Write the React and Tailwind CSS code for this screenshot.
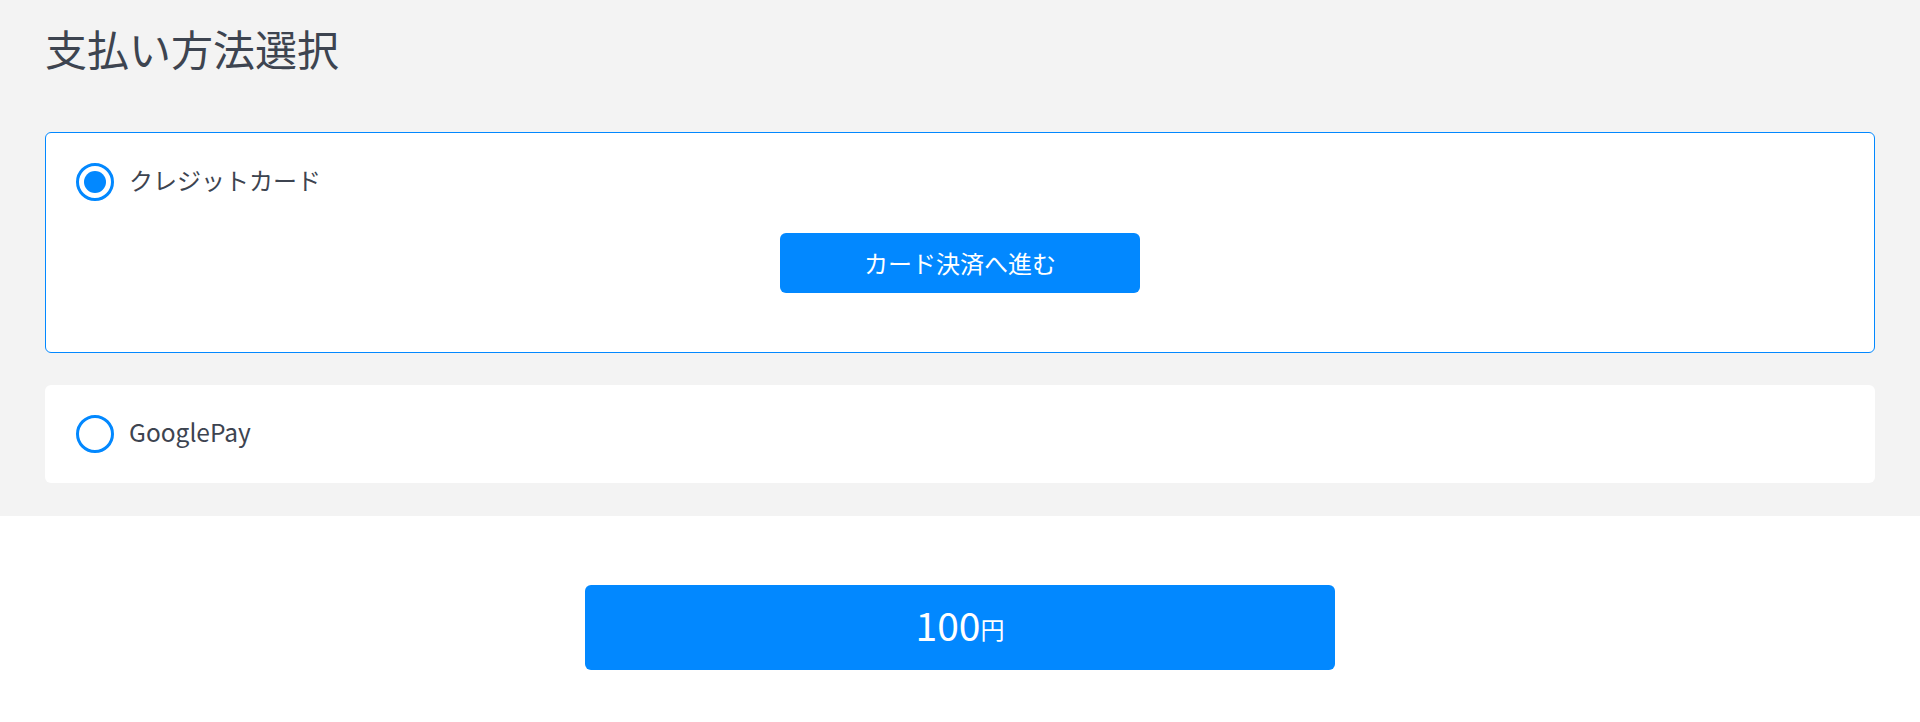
const FONT = "font-['Meiryo','Noto_Sans_CJK_JP',sans-serif]";

function Radio({ checked }) {
  return (
    <span className="flex h-[38px] w-[38px] shrink-0 items-center justify-center rounded-full border-[3px] border-[#0288ff] bg-white">
      {checked && <span className="h-[22px] w-[22px] rounded-full bg-[#0288ff]" />}
    </span>
  );
}

export default function App() {
  return (
    <div className={`min-h-screen bg-white text-[#3d4450] ${FONT}`}>
      <section className="bg-[#f3f3f3] px-[45px] pt-[18px] pb-[33px]">
        <h1 className="text-[42px] leading-[60px] font-normal">支払い方法選択</h1>

        {/* credit card */}
        <div className="mt-[54px] h-[221px] rounded-[6px] border border-[#0288ff] bg-white pl-[30px] pr-[30px] pt-[30px]">
          <label className="flex items-center">
            <Radio checked />
            <span className="mb-[5px] ml-[15px] text-[24px] leading-none">クレジットカード</span>
          </label>
          <div className="mt-[32px] flex justify-center">
            <button className="h-[60px] w-[360px] rounded-[6px] bg-[#0288ff] text-[24px] text-white">
              カード決済へ進む
            </button>
          </div>
        </div>

        {/* google pay */}
        <div className="mt-[32px] flex h-[98px] items-center rounded-[6px] bg-white pl-[31px]">
          <Radio />
          <span className="mb-[4px] ml-[15px] text-[24.5px] leading-none">GooglePay</span>
        </div>
      </section>

      <div className="flex justify-center pt-[69px]">
        <button className="flex h-[85px] w-[750px] items-center justify-center rounded-[6px] bg-[#0288ff] pb-[6px] text-white">
          <span className="text-[39px] leading-none">100</span>
          <span className="mt-[8px] text-[24px] leading-none">円</span>
        </button>
      </div>
    </div>
  );
}
